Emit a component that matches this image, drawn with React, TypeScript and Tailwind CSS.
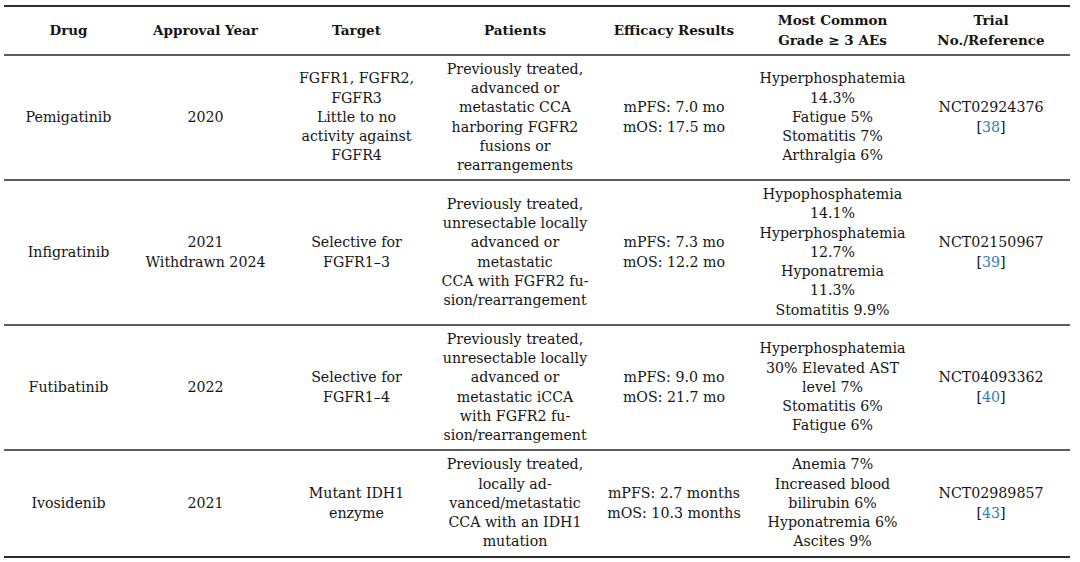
import React from "react";

type Cell = React.ReactNode[];

const Ref = ({ n }: { n: string }) => (
  <span>
    [<span className="text-[#2f7bbf]">{n}</span>]
  </span>
);

const cols = "grid grid-cols-[129px_145px_157px_160px_158px_159px_158px] items-center text-center";

const headers: Cell[] = [
  ["Drug"],
  ["Approval Year"],
  ["Target"],
  ["Patients"],
  ["Efficacy Results"],
  ["Most Common", "Grade ≥ 3 AEs"],
  ["Trial", "No./Reference"],
];

const rows: { h: string; cells: Cell[] }[] = [
  {
    h: "h-[125px]",
    cells: [
      ["Pemigatinib"],
      ["2020"],
      ["FGFR1, FGFR2,", "FGFR3", "Little to no", "activity against", "FGFR4"],
      [
        "Previously treated,",
        "advanced or",
        "metastatic CCA",
        "harboring FGFR2",
        "fusions or",
        "rearrangements",
      ],
      ["mPFS: 7.0 mo", "mOS: 17.5 mo"],
      ["Hyperphosphatemia", "14.3%", "Fatigue 5%", "Stomatitis 7%", "Arthralgia 6%"],
      ["NCT02924376", <Ref n="38" />],
    ],
  },
  {
    h: "h-[145px]",
    cells: [
      ["Infigratinib"],
      ["2021", "Withdrawn 2024"],
      ["Selective for", "FGFR1–3"],
      [
        "Previously treated,",
        "unresectable locally",
        "advanced or",
        "metastatic",
        "CCA with FGFR2 fu-",
        "sion/rearrangement",
      ],
      ["mPFS: 7.3 mo", "mOS: 12.2 mo"],
      [
        "Hypophosphatemia",
        "14.1%",
        "Hyperphosphatemia",
        "12.7%",
        "Hyponatremia",
        "11.3%",
        "Stomatitis 9.9%",
      ],
      ["NCT02150967", <Ref n="39" />],
    ],
  },
  {
    h: "h-[125px]",
    cells: [
      ["Futibatinib"],
      ["2022"],
      ["Selective for", "FGFR1–4"],
      [
        "Previously treated,",
        "unresectable locally",
        "advanced or",
        "metastatic iCCA",
        "with FGFR2 fu-",
        "sion/rearrangement",
      ],
      ["mPFS: 9.0 mo", "mOS: 21.7 mo"],
      ["Hyperphosphatemia", "30% Elevated AST", "level 7%", "Stomatitis 6%", "Fatigue 6%"],
      ["NCT04093362", <Ref n="40" />],
    ],
  },
  {
    h: "h-[105px]",
    cells: [
      ["Ivosidenib"],
      ["2021"],
      ["Mutant IDH1", "enzyme"],
      [
        "Previously treated,",
        "locally ad-",
        "vanced/metastatic",
        "CCA with an IDH1",
        "mutation",
      ],
      ["mPFS: 2.7 months", "mOS: 10.3 months"],
      ["Anemia 7%", "Increased blood", "bilirubin 6%", "Hyponatremia 6%", "Ascites 9%"],
      ["NCT02989857", <Ref n="43" />],
    ],
  },
];

function CellView({ lines }: { lines: Cell }) {
  return (
    <div className="flex flex-col items-center">
      {lines.map((l, i) => (
        <div key={i} className="whitespace-nowrap">
          {l}
        </div>
      ))}
    </div>
  );
}

export default function App() {
  return (
    <div
      className="w-[1080px] h-[562px] bg-white pt-[5px] pl-[4px] text-[#151515] text-[14.2px] leading-[19.3px]"
      style={{ fontFamily: '"DejaVu Serif", "Liberation Serif", serif' }}
    >
      <div className="w-[1066px] border-t-2 border-b-2 border-[#2e2e2e]">
        <div className={`${cols} h-[49px] border-b-2 border-[#5c5c5c] font-bold text-[13.5px]`}>
          {headers.map((c, i) => (
            <CellView key={i} lines={c} />
          ))}
        </div>
        {rows.map((r, ri) => (
          <div
            key={ri}
            className={`${cols} ${r.h} ${ri < rows.length - 1 ? "border-b-2 border-[#5c5c5c]" : ""}`}
          >
            {r.cells.map((c, i) => (
              <CellView key={i} lines={c} />
            ))}
          </div>
        ))}
      </div>
    </div>
  );
}
